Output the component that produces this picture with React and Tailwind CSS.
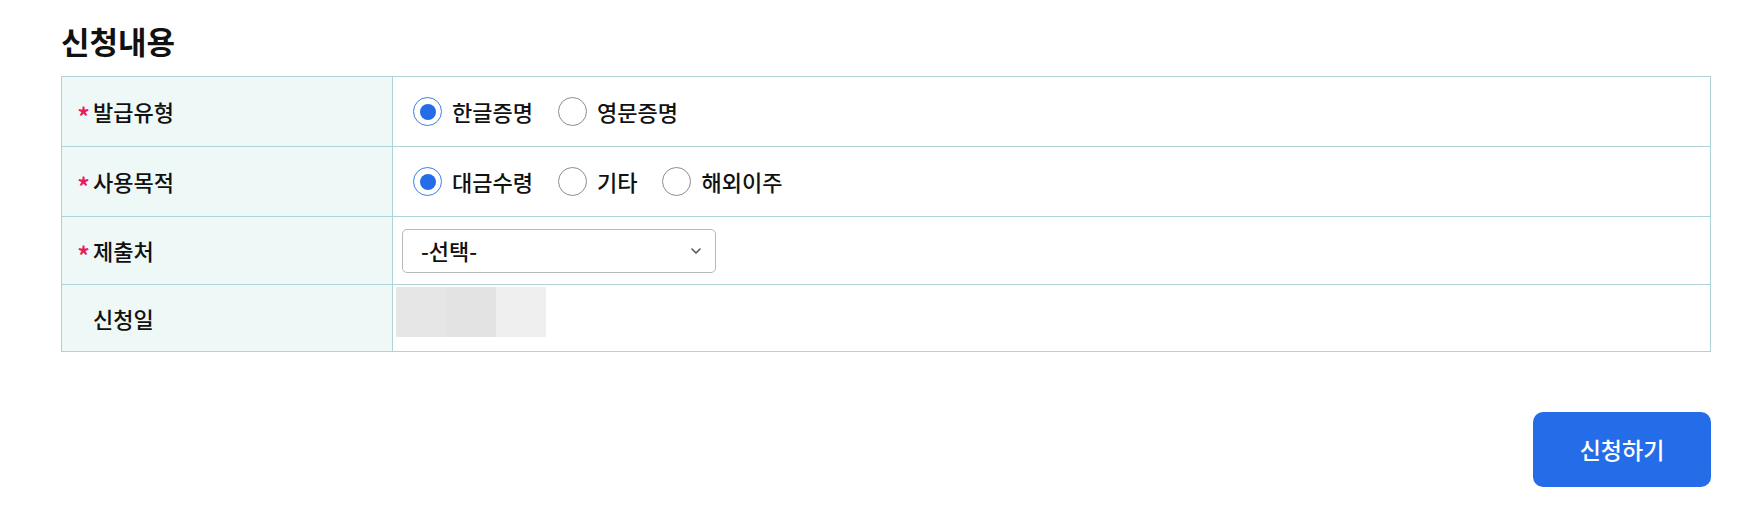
import { useState } from "react";

const FONT = { fontFamily: '"Noto Sans CJK KR", "Noto Sans", sans-serif' };

function Radio({ label, checked, onClick }) {
  return (
    <label className="flex items-center cursor-pointer" onClick={onClick}>
      <span
        className={`flex items-center justify-center w-[29px] h-[29px] rounded-full border bg-white ${
          checked ? "border-[#3b7ded]" : "border-[#8c8c8c]"
        }`}
      >
        {checked && <span className="w-[16px] h-[16px] rounded-full bg-[#256ce8]" />}
      </span>
      <span className="ml-[10px] text-[22px] font-medium text-[#111]">{label}</span>
    </label>
  );
}

function RadioGroup({ options, value, onChange }) {
  return (
    <div className="flex items-center gap-[25px] pl-[20px]">
      {options.map((opt) => (
        <Radio key={opt} label={opt} checked={value === opt} onClick={() => onChange(opt)} />
      ))}
    </div>
  );
}

function Row({ label, required, last, h, children }) {
  return (
    <div className={`grid grid-cols-[331px_1fr] ${h} ${last ? "" : "border-b border-[#aed3d9]"}`}>
      <div className="flex items-center pl-[15px] bg-[#eef8f6] border-r border-[#aed3d9]">
        <span className="w-[16px] text-[27px] font-medium text-[#e8195f] leading-none pt-[10px]">
          {required ? "*" : ""}
        </span>
        <span className="text-[22px] font-medium text-[#111]">{label}</span>
      </div>
      {children}
    </div>
  );
}

export default function App() {
  const [type, setType] = useState("한글증명");
  const [purpose, setPurpose] = useState("대금수령");

  return (
    <div className="w-[1748px] h-[519px] bg-white pl-[61px] pr-[37px] pt-[16px]" style={FONT}>
      <h2 className="text-[31px] font-bold text-[#111] leading-[50px] mb-[10px]">신청내용</h2>

      <div className="border border-[#aed3d9]">
        <Row label="발급유형" required h="h-[70px]">
          <div className="flex items-center">
            <RadioGroup options={["한글증명", "영문증명"]} value={type} onChange={setType} />
          </div>
        </Row>
        <Row label="사용목적" required h="h-[70px]">
          <div className="flex items-center">
            <RadioGroup options={["대금수령", "기타", "해외이주"]} value={purpose} onChange={setPurpose} />
          </div>
        </Row>
        <Row label="제출처" required h="h-[68px]">
          <div className="flex items-center pl-[9px]">
            <div className="flex items-center justify-between w-[314px] h-[44px] border border-[#b8b8b8] rounded-[5px] pl-[18px] pr-[14px]">
              <span className="text-[22px] font-medium text-[#111]">-선택-</span>
              <svg width="10" height="6" viewBox="0 0 10 6" fill="none">
                <path d="M1 1l4 4 4-4" stroke="#555" strokeWidth="1.6" strokeLinecap="round" strokeLinejoin="round" />
              </svg>
            </div>
          </div>
        </Row>
        <Row label="신청일" last h="h-[66px]">
          <div className="flex items-start pl-[3px] pt-[2px]">
            <div className="w-[50px] h-[50px] bg-[#e6e6e6]" />
            <div className="w-[50px] h-[50px] bg-[#e3e3e3]" />
            <div className="w-[50px] h-[50px] bg-[#efefef]" />
          </div>
        </Row>
      </div>

      <div className="flex justify-end mt-[60px]">
        <button className="w-[178px] h-[75px] rounded-[10px] bg-[#256ce8] text-white text-[23px] font-medium">
          신청하기
        </button>
      </div>
    </div>
  );
}
